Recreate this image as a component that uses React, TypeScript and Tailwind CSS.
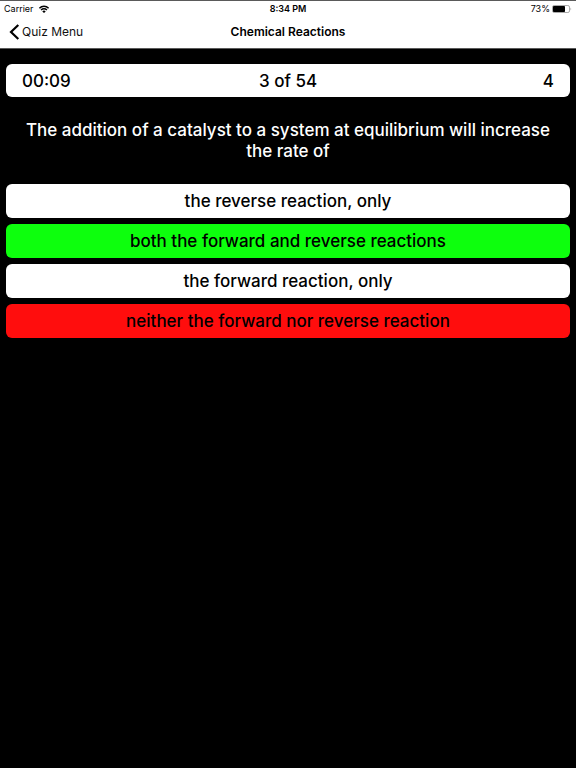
import React from 'react';

interface Answer {
  text: string;
  state: 'idle' | 'correct' | 'wrong';
}

const answers: Answer[] = [
  { text: 'the reverse reaction, only', state: 'idle' },
  { text: 'both the forward and reverse reactions', state: 'correct' },
  { text: 'the forward reaction, only', state: 'idle' },
  { text: 'neither the forward nor reverse reaction', state: 'wrong' },
];

const answerColors = {
  idle: 'bg-white',
  correct: 'bg-[#0dff0d]',
  wrong: 'bg-[#ff0d0d]',
};

const StatusBar: React.FC = () => (
  <div className="grid grid-cols-3 items-center h-[15px] px-1 text-[9px] leading-4">
    <div className="flex items-center gap-1">
      <span>Carrier</span>
      <svg className="w-3 h-2" viewBox="0 0 12 8">
        <path
          d="M1.4 3.2a6.5 6.5 0 0 1 9.2 0M3.1 5a4.1 4.1 0 0 1 5.8 0"
          fill="none"
          stroke="black"
          strokeWidth="1.5"
        />
        <path d="M6 8 4.3 6.4a2.4 2.4 0 0 1 3.4 0z" />
      </svg>
    </div>
    <span className="text-center font-semibold">8:34 PM</span>
    <div className="flex items-center justify-end gap-0.5">
      <span>73%</span>
      <svg className="w-5 h-2" viewBox="0 0 20 8">
        <rect x="0.5" y="0.5" width="17" height="7" rx="1.6" fill="none" stroke="#aaa" />
        <rect x="1" y="1" width="12" height="6" rx="0.8" />
        <path d="M18.5 2.5q1.5 1.5 0 3z" fill="#999" />
      </svg>
    </div>
  </div>
);

const NavBar: React.FC = () => (
  <nav className="grid grid-cols-3 items-center h-8 px-2 text-xs">
    <button className="flex items-center gap-0.5 justify-self-start text-[#111]">
      <svg className="w-3 h-4" viewBox="0 0 12 16" fill="none" stroke="black" strokeWidth="2.2">
        <path d="M10.3 1 3 8l7.3 7" />
      </svg>
      Quiz Menu
    </button>
    <h1 className="text-center font-semibold whitespace-nowrap">Chemical Reactions</h1>
  </nav>
);

export default function App() {
  return (
    <div className="min-h-screen bg-black text-black font-['Inter',sans-serif]">
      <header className="bg-white border-y border-[#5a5a5a]">
        <StatusBar />
        <NavBar />
      </header>

      <main className="px-1.5 pt-[15px]">
        <div className="grid grid-cols-3 items-center h-[33px] px-4 pt-0.5 bg-white rounded-md text-[17px] font-medium">
          <span>00:09</span>
          <span className="text-center">3 of 54</span>
          <span className="text-right">4</span>
        </div>

        <p className="px-4 pt-[23px] pb-[22px] text-white text-center text-[17px] leading-[21px] font-medium">
          The addition of a catalyst to a system at equilibrium will increase the rate of
        </p>

        <div className="flex flex-col gap-1.5">
          {answers.map((answer) => (
            <button
              key={answer.text}
              className={`h-[34px] pt-0.5 rounded-md text-[17px] font-medium ${answerColors[answer.state]}`}
            >
              {answer.text}
            </button>
          ))}
        </div>
      </main>
    </div>
  );
}
